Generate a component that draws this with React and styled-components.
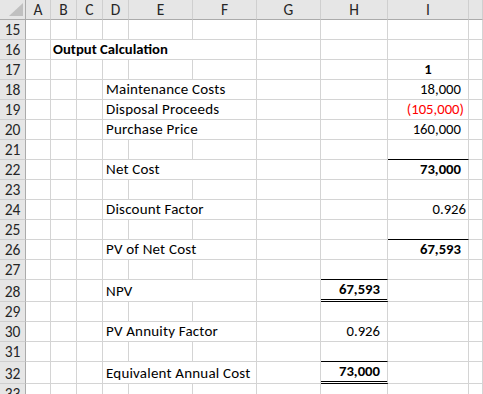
import React from 'react';
import styled, { createGlobalStyle } from 'styled-components';

const GlobalStyle = createGlobalStyle`
  html, body { margin: 0; padding: 0; background: #fff; }
  body { font-family: Carlito, Lato, "Liberation Sans", sans-serif; }
`;

const COLS = '26px 25px 26px 26px 26px 64px 64px 64px 67px 81px 1fr';
const GRID = '#d4d4d4';

const Sheet = styled.div`
  width: 483px;
  height: 394px;
  overflow: hidden;
  font-size: 14.7px;
  color: #000;
`;

const Row = styled.div`
  display: grid;
  grid-template-columns: ${COLS};
  height: ${(p) => p.$h}px;
`;

const HeaderCell = styled.div`
  background: #e6e6e6;
  border-right: 1px solid ${(p) => (p.$corner ? '#ababab' : '#cfcfcf')};
  border-bottom: 1px solid #ababab;
  display: flex;
  align-items: center;
  justify-content: center;
  color: #262626;
  font-size: 15.5px;
  position: relative;
`;

const RowNum = styled.div`
  background: #e6e6e6;
  border-right: 1px solid #ababab;
  border-bottom: 1px solid #cfcfcf;
  display: flex;
  align-items: flex-end;
  justify-content: center;
  padding-bottom: 1px;
  color: #262626;
  font-size: 15.5px;
  line-height: 17px;
`;

const Cell = styled.div`
  grid-column: span ${(p) => p.$span || 1};
  border-right: 1px solid ${GRID};
  border-bottom: ${(p) =>
    p.$bottom === 'double'
      ? '3px double #000'
      : p.$bottom === 'black'
      ? '1px solid #000'
      : `1px solid ${GRID}`};
  display: flex;
  align-items: flex-end;
  justify-content: ${(p) =>
    p.$align === 'center' ? 'center' : p.$align === 'right' ? 'flex-end' : 'flex-start'};
  padding: 0 ${(p) => p.$pr ?? 0}px 1px ${(p) => p.$pl ?? 0}px;
  white-space: nowrap;
  font-weight: ${(p) => (p.$bold ? 700 : 400)};
  color: ${(p) => (p.$red ? '#ff0000' : '#000')};
  line-height: 17px;
`;

const Label = styled(Cell)`
  font-size: 15px;
  letter-spacing: 0.2px;
`;

const Corner = styled.svg`
  position: absolute;
  left: 9px;
  top: 3px;
`;

const rows = [
  { n: 15 },
  { n: 16, title: 'Output Calculation' },
  { n: 17, i: { text: '1', bold: true, align: 'center' } },
  { n: 18, label: 'Maintenance Costs', i: { text: '18,000', pr: 7 } },
  { n: 19, label: 'Disposal Proceeds', i: { text: '(105,000)', pr: 4, red: true } },
  { n: 20, label: 'Purchase Price', i: { text: '160,000', pr: 7 } },
  { n: 21, i: { bottom: 'black' } },
  { n: 22, label: 'Net Cost', i: { text: '73,000', pr: 7, bold: true } },
  { n: 23 },
  { n: 24, label: 'Discount Factor', i: { text: '0.926', pr: 2 } },
  { n: 25, i: { bottom: 'black' } },
  { n: 26, label: 'PV of Net Cost', i: { text: '67,593', pr: 7, bold: true } },
  { n: 27, h: { bottom: 'black' } },
  { n: 28, h: { text: '67,593', pr: 7, bold: true, bottom: 'double' }, label: 'NPV', height: 22 },
  { n: 29 },
  { n: 30, label: 'PV Annuity Factor', h: { text: '0.926', pr: 7 } },
  { n: 31, h: { bottom: 'black' } },
  { n: 32, label: 'Equivalent Annual Cost', h: { text: '73,000', pr: 7, bold: true, bottom: 'double' }, height: 22 },
  { n: 33 },
];

function ValueCell({ v }) {
  if (!v) return <Cell />;
  return (
    <Cell
      $align={v.align || 'right'}
      $pr={v.pr}
      $bold={v.bold}
      $red={v.red}
      $bottom={v.bottom}
    >
      {v.text}
    </Cell>
  );
}

function SheetRow({ r }) {
  return (
    <Row $h={r.height || 20}>
      <RowNum>{r.n}</RowNum>
      <Cell />
      {r.title ? (
        <Cell $span={5} $pl={2} $bold>
          {r.title}
        </Cell>
      ) : (
        <>
          <Cell />
          <Cell />
          {r.label ? (
            <Label $span={3} $pl={3}>
              {r.label}
            </Label>
          ) : (
            <>
              <Cell />
              <Cell />
              <Cell />
            </>
          )}
        </>
      )}
      <Cell />
      <ValueCell v={r.h} />
      <ValueCell v={r.i} />
      <Cell />
    </Row>
  );
}

export default function App() {
  const letters = ['A', 'B', 'C', 'D', 'E', 'F', 'G', 'H', 'I', ''];
  return (
    <>
      <GlobalStyle />
      <Sheet>
        <Row $h={20}>
          <HeaderCell $corner>
            <Corner width="14" height="13" viewBox="0 0 14 13">
              <polygon points="14,0 14,13 0,13" fill="#c0c0c0" />
            </Corner>
          </HeaderCell>
          {letters.map((l, idx) => (
            <HeaderCell key={idx}>{l}</HeaderCell>
          ))}
        </Row>
        {rows.map((r) => (
          <SheetRow key={r.n} r={r} />
        ))}
      </Sheet>
    </>
  );
}
